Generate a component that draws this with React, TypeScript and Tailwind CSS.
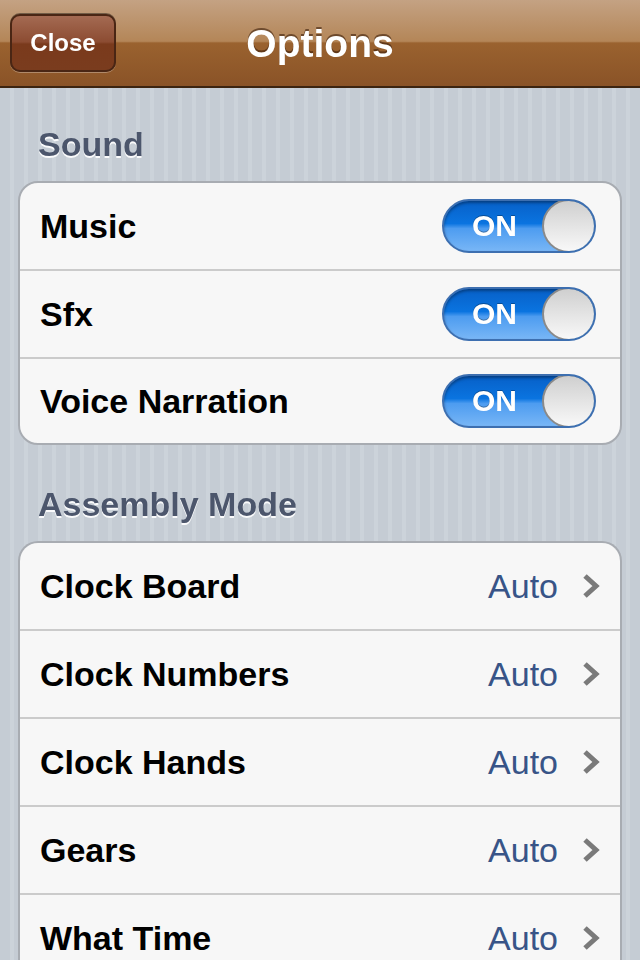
import React from 'react';

const font = { fontFamily: '"Liberation Sans", Arial, sans-serif' };

const Toggle = () => (
  <div className="relative w-[154px] h-[54px] rounded-full border-2 border-[#3d6fb0] bg-[linear-gradient(180deg,#0760c8_0%,#0a74e0_45%,#4d9cf0_55%,#78b6f6_100%)] shadow-[inset_0_2px_3px_rgba(0,0,0,0.35)] overflow-hidden">
    <span className="absolute left-[28px] top-1/2 -translate-y-1/2 text-white font-bold text-[30px] leading-none drop-shadow-[0_-1px_0_rgba(0,0,0,0.3)]">
      ON
    </span>
    <div className="absolute right-[-2px] top-[-2px] w-[54px] h-[54px] rounded-full border-2 border-[#8a8a8a] bg-[linear-gradient(180deg,#cfcfcf_0%,#e8e8e8_60%,#f8f8f8_100%)]" />
  </div>
);

const Chevron = () => (
  <svg width="18" height="26" viewBox="0 0 18 26" className="ml-[24px]">
    <path d="M3 3 L14 13 L3 23" fill="none" stroke="#7a7a7a" strokeWidth="5" strokeLinejoin="miter" />
  </svg>
);

const SectionHeader = ({ title, height }: { title: string; height: string }) => (
  <div className={`px-[38px] ${height} flex items-end pb-[20px]`}>
    <span className="text-[34px] font-bold leading-none text-[#4c566c] drop-shadow-[0_2px_0_rgba(255,255,255,0.9)]">
      {title}
    </span>
  </div>
);

const soundRows = ['Music', 'Sfx', 'Voice Narration'];
const modeRows = ['Clock Board', 'Clock Numbers', 'Clock Hands', 'Gears', 'What Time'];

export default function App() {
  return (
    <div style={font} className="w-[640px] h-[960px] overflow-hidden flex flex-col bg-[repeating-linear-gradient(90deg,#c5ccd4_0px,#c5ccd4_10px,#ccd3da_10px,#ccd3da_14px)]">
      {/* Nav bar */}
      <div className="h-[88px] shrink-0 border-b-2 border-[#3c2410] bg-[linear-gradient(180deg,#c4a283_0%,#b48658_48%,#9a622f_50%,#8a5327_100%)] flex items-center relative">
        <button className="absolute left-[10px] top-[14px] w-[106px] h-[58px] rounded-[10px] border-2 border-[#4a2614] bg-[linear-gradient(180deg,#a46a52_0%,#8c4c32_48%,#7a3a1c_52%,#7a3c1e_100%)] shadow-[0_1px_0_rgba(255,255,255,0.3)] text-white font-bold text-[24px] drop-shadow-[0_-1px_0_rgba(0,0,0,0.4)]">
          Close
        </button>
        <div className="w-full text-center text-white font-bold text-[39px] leading-none drop-shadow-[0_-2px_0_rgba(60,30,10,0.6)]">
          Options
        </div>
      </div>

      <div className="flex flex-col">
        <SectionHeader title="Sound" height="h-[93px]" />

        {/* Sound group */}
        <div className="mx-[18px] rounded-[20px] border-2 border-[#a8acb2] bg-[#f7f7f7] overflow-hidden">
          {soundRows.map((label, i) => (
            <div
              key={label}
              className={`flex items-center justify-between pl-[20px] pr-[24px] ${i === 1 ? 'h-[88px]' : 'h-[86px]'} ${i > 0 ? 'border-t-2 border-[#cbcbcb]' : ''}`}
            >
              <span className="text-[34px] font-bold text-black">{label}</span>
              <Toggle />
            </div>
          ))}
        </div>

        <SectionHeader title="Assembly Mode" height="h-[96px]" />

        {/* Assembly mode group */}
        <div className="mx-[18px] rounded-t-[20px] border-2 border-b-0 border-[#a8acb2] bg-[#f7f7f7] overflow-hidden">
          {modeRows.map((label, i) => (
            <div
              key={label}
              className={`flex items-center justify-between pl-[20px] pr-[20px] ${i > 0 ? 'h-[88px] border-t-2 border-[#cbcbcb]' : 'h-[86px]'}`}
            >
              <span className="text-[34px] font-bold text-black">{label}</span>
              <div className="flex items-center">
                <span className="text-[34px] text-[#385487]">Auto</span>
                <Chevron />
              </div>
            </div>
          ))}
        </div>
      </div>
    </div>
  );
}
